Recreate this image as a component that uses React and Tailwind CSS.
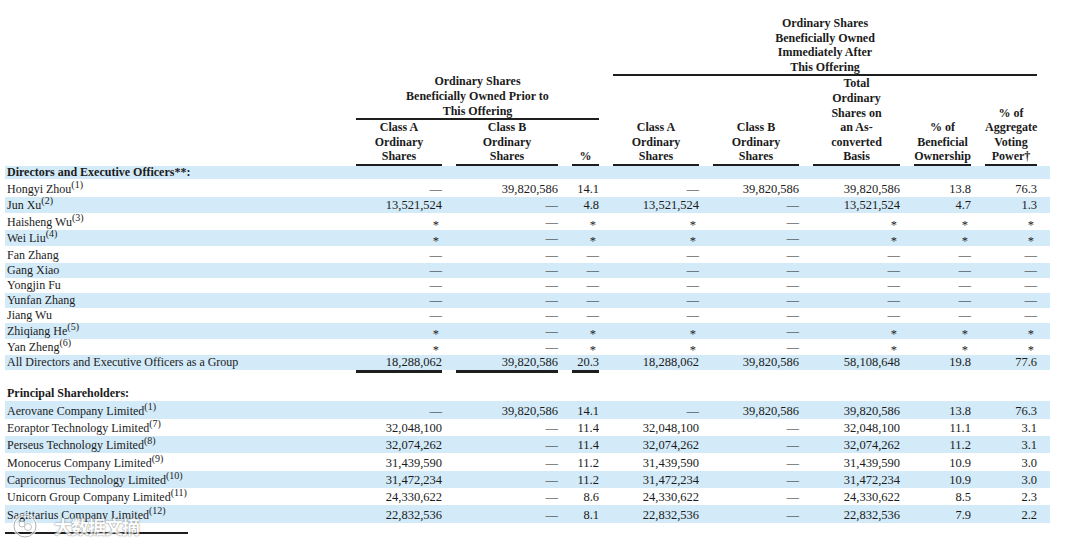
import React from 'react';

const serif = { fontFamily: "'Liberation Serif', 'Times New Roman', serif" };

const dash = '—';
const star = '*';

const directors = [
  { name: 'Hongyi Zhou', sup: '(1)', h: 'h-[18px]', vals: [dash, '39,820,586', '14.1', dash, '39,820,586', '39,820,586', '13.8', '76.3'] },
  { name: 'Jun Xu', sup: '(2)', h: 'h-[16px]', vals: ['13,521,524', dash, '4.8', '13,521,524', dash, '13,521,524', '4.7', '1.3'] },
  { name: 'Haisheng Wu', sup: '(3)', h: 'h-[17px]', vals: [star, dash, star, star, dash, star, star, star] },
  { name: 'Wei Liu', sup: '(4)', h: 'h-[16px]', vals: [star, dash, star, star, dash, star, star, star] },
  { name: 'Fan Zhang', h: 'h-[17px]', vals: [dash, dash, dash, dash, dash, dash, dash, dash] },
  { name: 'Gang Xiao', h: 'h-[15px]', vals: [dash, dash, dash, dash, dash, dash, dash, dash] },
  { name: 'Yongjin Fu', h: 'h-[15px]', vals: [dash, dash, dash, dash, dash, dash, dash, dash] },
  { name: 'Yunfan Zhang', h: 'h-[15px]', vals: [dash, dash, dash, dash, dash, dash, dash, dash] },
  { name: 'Jiang Wu', h: 'h-[15px]', vals: [dash, dash, dash, dash, dash, dash, dash, dash] },
  { name: 'Zhiqiang He', sup: '(5)', h: 'h-[16px]', vals: [star, dash, star, star, dash, star, star, star] },
  { name: 'Yan Zheng', sup: '(6)', h: 'h-[16px]', vals: [star, dash, star, star, dash, star, star, star] },
  { name: 'All Directors and Executive Officers as a Group', h: 'h-[15px]', vals: ['18,288,062', '39,820,586', '20.3', '18,288,062', '39,820,586', '58,108,648', '19.8', '77.6'] },
];

const principals = [
  { name: 'Aerovane Company Limited', sup: '(1)', h: 'h-[18px]', vals: [dash, '39,820,586', '14.1', dash, '39,820,586', '39,820,586', '13.8', '76.3'] },
  { name: 'Eoraptor Technology Limited', sup: '(7)', h: 'h-[17px]', vals: ['32,048,100', dash, '11.4', '32,048,100', dash, '32,048,100', '11.1', '3.1'] },
  { name: 'Perseus Technology Limited', sup: '(8)', h: 'h-[17px]', vals: ['32,074,262', dash, '11.4', '32,074,262', dash, '32,074,262', '11.2', '3.1'] },
  { name: 'Monocerus Company Limited', sup: '(9)', h: 'h-[18px]', vals: ['31,439,590', dash, '11.2', '31,439,590', dash, '31,439,590', '10.9', '3.0'] },
  { name: 'Capricornus Technology Limited', sup: '(10)', h: 'h-[17px]', vals: ['31,472,234', dash, '11.2', '31,472,234', dash, '31,472,234', '10.9', '3.0'] },
  { name: 'Unicorn Group Company Limited', sup: '(11)', h: 'h-[17px]', vals: ['24,330,622', dash, '8.6', '24,330,622', dash, '24,330,622', '8.5', '2.3'] },
  { name: 'Sagittarius Company Limited', sup: '(12)', h: 'h-[18px]', vals: ['22,832,536', dash, '8.1', '22,832,536', dash, '22,832,536', '7.9', '2.2'] },
];

const gridCols = 'grid grid-cols-[337px_86px_102px_27px_86px_86px_87px_57px_52px] gap-x-[14px]';

const ColHead = ({ children }) => (
  <div className="text-center leading-[14.6px] border-b-2 border-[#1e1e1e]">{children}</div>
);

const Cell = ({ v }) => {
  if (v === star) {
    return <div className="text-right pr-[3px]"><span className="relative top-[3px]">*</span></div>;
  }
  return <div className="text-right whitespace-nowrap">{v}</div>;
};

const Row = ({ r, blue }) => (
  <div className={`${gridCols} ${r.h} items-end pr-[13px] pb-[1px] leading-[14px] ${blue ? 'bg-[#d3eaf8]' : ''}`}>
    <div className="pl-[2px] whitespace-nowrap text-[12px]">
      {r.name}
      {r.sup && <sup className="text-[10px]">{r.sup}</sup>}
    </div>
    {r.vals.map((v, i) => (
      <Cell key={i} v={v} />
    ))}
  </div>
);

export default function App() {
  return (
    <div className="relative w-[1080px] h-[538px] bg-white text-[#1b1b1b] overflow-hidden" style={serif}>
      {/* header */}
      <div className="flex items-end gap-x-[14px] pt-[16px] pl-[5px] text-[12px] font-bold">
        <div className="w-[337px] shrink-0" />
        <div className="w-[243px] shrink-0 flex flex-col">
          <div className="text-center leading-[14.6px]">
            Ordinary Shares<br />Beneficially Owned Prior to<br />This Offering
          </div>
          <div className="h-[2px] bg-[#1e1e1e]" />
          <div className="grid grid-cols-[86px_102px_27px] gap-x-[14px] items-end">
            <ColHead>Class A<br />Ordinary<br />Shares</ColHead>
            <ColHead>Class B<br />Ordinary<br />Shares</ColHead>
            <ColHead>%</ColHead>
          </div>
        </div>
        <div className="w-[424px] shrink-0 flex flex-col">
          <div className="text-center leading-[14.6px]">
            Ordinary Shares<br />Beneficially Owned<br />Immediately After<br />This Offering
          </div>
          <div className="h-[2px] bg-[#1e1e1e]" />
          <div className="grid grid-cols-[86px_86px_87px_57px_52px] gap-x-[14px] items-end">
            <ColHead>Class A<br />Ordinary<br />Shares</ColHead>
            <ColHead>Class B<br />Ordinary<br />Shares</ColHead>
            <ColHead>Total<br />Ordinary<br />Shares on<br />an As-<br />converted<br />Basis</ColHead>
            <ColHead>% of<br />Beneficial<br />Ownership</ColHead>
            <ColHead>% of<br />Aggregate<br />Voting<br />Power†</ColHead>
          </div>
        </div>
      </div>

      {/* body */}
      <div className="ml-[5px] w-[1045px] text-[12.5px]">
        <div className="h-[13px] bg-[#d3eaf8] pl-[2px] font-bold text-[12px] leading-[13px]">
          Directors and Executive Officers**:
        </div>
        {directors.map((r, i) => (
          <Row key={r.name} r={r} blue={i % 2 === 1} />
        ))}
        <div className={`${gridCols} h-[15px] pr-[13px]`}>
          <div />
          <div className="h-[3px] bg-[#1e1e1e]" />
          <div className="h-[3px] bg-[#1e1e1e]" />
          <div className="h-[3px] bg-[#1e1e1e]" />
        </div>
        <div className="h-[16px] flex items-end pb-[1px] pl-[2px] font-bold text-[12px] leading-[14px]">
          Principal Shareholders:
        </div>
        {principals.map((r, i) => (
          <Row key={r.name} r={r} blue={i % 2 === 0} />
        ))}
        <div className="mt-[9px] w-[183px] h-[2px] bg-[#1e1e1e]" />
      </div>

      {/* watermark */}
      <div className="absolute left-[12px] top-[513px] flex items-center gap-x-[16px] opacity-75">
        <svg width="26" height="26" viewBox="0 0 26 26">
          <circle cx="13" cy="13" r="11" fill="none" stroke="#ffffff" strokeWidth="3" />
          <circle cx="13" cy="13" r="11" fill="none" stroke="#9a9a9a" strokeWidth="1" />
          <circle cx="10" cy="11" r="3" fill="#ffffff" stroke="#9a9a9a" strokeWidth="0.8" />
          <circle cx="16" cy="14" r="3.5" fill="#ffffff" stroke="#9a9a9a" strokeWidth="0.8" />
        </svg>
        <span
          className="text-[18px] leading-[22px] font-bold text-white tracking-[-1px] [text-shadow:0_0_1px_#666,0_0_2px_#888]"
          style={{ fontFamily: "'Noto Sans CJK SC', sans-serif" }}
        >
          大数据文摘
        </span>
      </div>
    </div>
  );
}
